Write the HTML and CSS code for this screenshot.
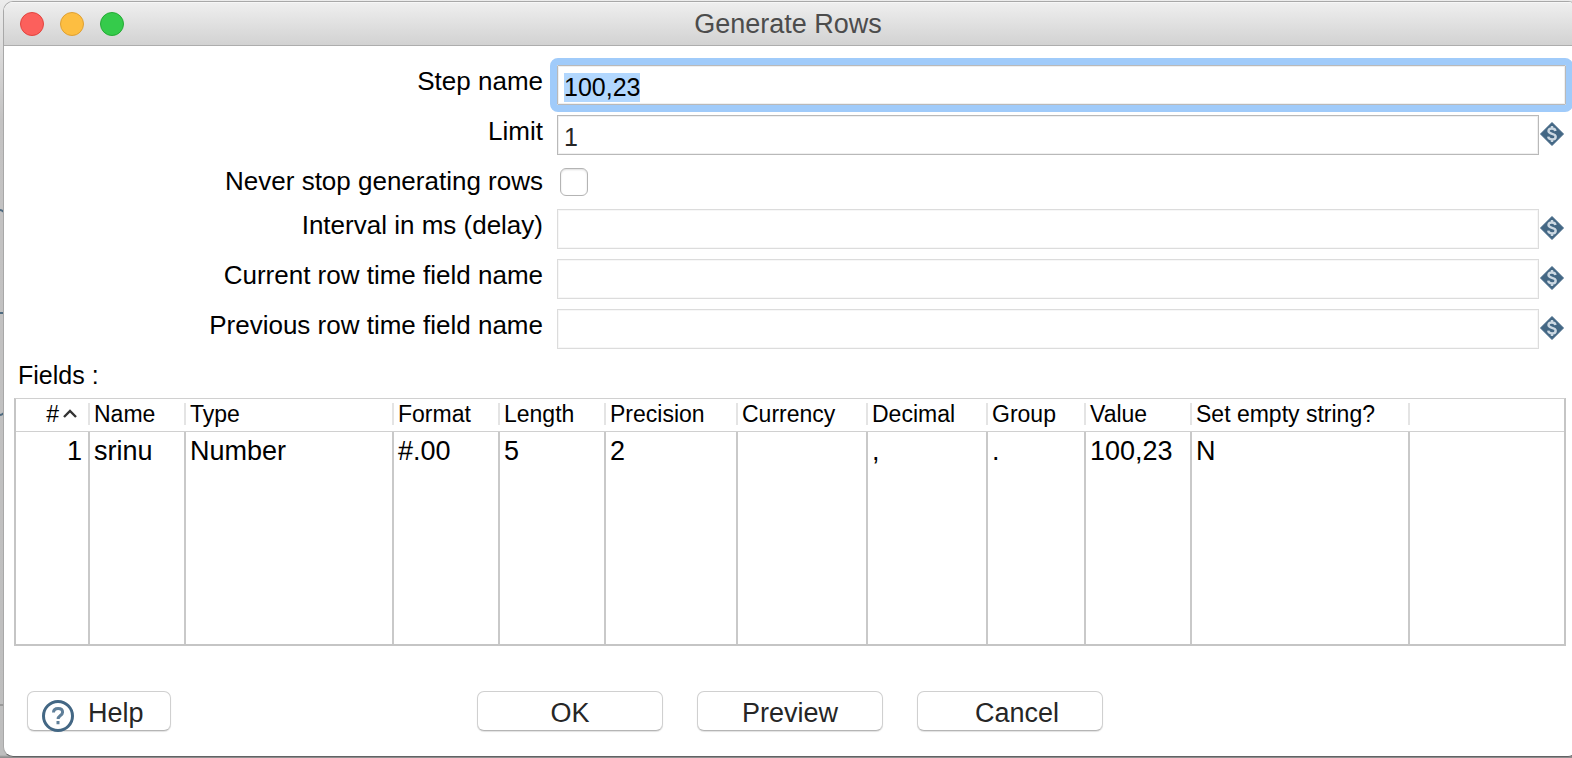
FILE: index.html
```html
<!DOCTYPE html>
<html lang="en">
<head>
<meta charset="utf-8">
<title>Generate Rows</title>
<link rel="stylesheet" href="styles.css">
</head>
<body>
<svg width="0" height="0" class="defs" aria-hidden="true">
  <symbol id="variable" viewBox="0 0 24 24">
    <path d="M12 0.500 23.500 12 12 23.500 0.500 12Z" fill="#436784" stroke="#436784" stroke-linejoin="round"/>
    <path d="M15.500 9C15.200 7.300 13.900 6.500 12 6.500C9.900 6.500 8.500 7.500 8.500 9.100C8.500 12.800 15.700 10.900 15.700 14.700C15.700 16.400 14.200 17.400 12 17.400C9.800 17.400 8.500 16.400 8.200 14.600M12 4V6.500M12 17.400V20" fill="none" stroke="#ccd8e2" stroke-width="2.400"/>
  </symbol>
</svg>
<svg class="canvas-lines" width="4" height="758" viewBox="0 0 4 758" aria-hidden="true">
  <path d="M0 210q2 0 4 2M0 313h4M0 415q2 0 4-2" fill="none" stroke="#4f6b80" stroke-width="2"/>
  <path d="M0 705h4" stroke="#999" stroke-width="2"/>
</svg>
<main class="window">
  <header class="titlebar">
    <div class="lights">
      <button class="light close" type="button" aria-label="Close"></button>
      <button class="light minimize" type="button" aria-label="Minimize"></button>
      <button class="light zoom" type="button" aria-label="Zoom"></button>
    </div>
    <h1>Generate Rows</h1>
  </header>
  <form class="content">
    <div class="settings">
      <label for="step">Step name</label>
      <input class="box focused" id="step" type="text" value="100,23">
      <label for="limit">Limit</label>
      <div class="field"><input class="box" id="limit" type="text" value="1"><svg class="var"><use href="#variable"/></svg></div>
      <label for="never">Never stop generating rows</label>
      <div class="check-cell"><input class="check" id="never" type="checkbox"></div>
      <label for="interval">Interval in ms (delay)</label>
      <div class="field"><input class="box" id="interval" type="text" disabled><svg class="var"><use href="#variable"/></svg></div>
      <label for="current">Current row time field name</label>
      <div class="field"><input class="box" id="current" type="text" disabled><svg class="var"><use href="#variable"/></svg></div>
      <label for="previous">Previous row time field name</label>
      <div class="field"><input class="box" id="previous" type="text" disabled><svg class="var"><use href="#variable"/></svg></div>
    </div>
    <h2 id="fields-title">Fields :</h2>
    <div class="table-area">
      <table aria-labelledby="fields-title">
        <colgroup>
          <col class="w-num"><col class="w-name"><col class="w-type"><col class="w-std"><col class="w-std"><col class="w-prec"><col class="w-curr"><col class="w-dec"><col class="w-group"><col class="w-std"><col class="w-set"><col>
        </colgroup>
        <thead>
          <tr>
            <th class="num"><span>#<svg width="14" height="9" viewBox="0 0 14 9"><path d="M1 8 7 2l6 6" fill="none" stroke="#333" stroke-width="2.400"/></svg></span></th>
            <th><span>Name</span></th><th><span>Type</span></th><th><span>Format</span></th><th><span>Length</span></th><th><span>Precision</span></th><th><span>Currency</span></th><th><span>Decimal</span></th><th><span>Group</span></th><th><span>Value</span></th><th><span>Set empty string?</span></th><th></th>
          </tr>
        </thead>
        <tbody>
          <tr>
            <td class="num">1</td><td>srinu</td><td>Number</td><td>#.00</td><td>5</td><td>2</td><td></td><td>,</td><td>.</td><td>100,23</td><td>N</td><td></td>
          </tr>
        </tbody>
      </table>
    </div>
    <footer class="actions">
      <button class="btn help" type="button"><svg width="32" height="32" viewBox="0 0 32 32"><circle cx="16" cy="16" r="14.500" fill="#fff" stroke="#436784" stroke-width="3"/><path d="M11.500 12.500c0-2.800 2-4 4.600-4 2.700 0 4.500 1.400 4.500 3.700 0 3.300-4.500 3.300-4.500 6.800M16 21v3.200" fill="none" stroke="#5f7f99" stroke-width="3"/></svg>Help</button>
      <div class="main-actions">
        <button class="btn" type="button">OK</button>
        <button class="btn" type="button">Preview</button>
        <button class="btn cancel" type="button">Cancel</button>
      </div>
    </footer>
  </form>
</main>
<script src="script.js"></script>
</body>
</html>
```
FILE: styles.css
```css
* { box-sizing: border-box; }

body {
  margin: 0;
  padding: 1px 0 1px 3px;
  min-height: 100vh;
  display: flex;
  background: linear-gradient(#ececec, #c4c3c3 120px, #bebebe calc(100% - 3px), #8e8e8e calc(100% - 1px));
  color: #000;
  font-family: "Liberation Sans", Arial, sans-serif;
  font-size: 26px;
  overflow: hidden;
}

.defs { position: absolute; }
.canvas-lines { position: absolute; left: 0; top: 0; }

/* The window's right edge runs slightly past the viewport. */
.window {
  position: relative;
  flex: 1;
  display: flex;
  flex-direction: column;
  margin-right: -6px;
  background: #fff;
  border: 1px solid #a8a8a8;
  border-bottom-color: #626264;
  border-radius: 10px;
  overflow: hidden;
}

.titlebar {
  display: grid;
  grid-template-columns: 1fr auto 1fr;
  align-items: center;
  height: 44px;
  padding: 1px 21px 0 16px;
  background: linear-gradient(#efefef, #d2d2d2);
  border-bottom: 1px solid #adadad;
  box-shadow: inset 0 1px #f7f7f7;
}

h1 {
  margin: 0;
  font-size: 27px;
  font-weight: 400;
  line-height: 32px;
  color: #4c4c4c;
}

.lights { display: flex; gap: 16px; }
.light { width: 24px; height: 24px; padding: 0; border: 1px solid; border-radius: 50%; }
.close { background: #fc605c; border-color: #e2443f; }
.minimize { background: #fdbe41; border-color: #dfa033; }
.zoom { background: #35cb4b; border-color: #25ab35; }

.content {
  flex: 1;
  display: flex;
  flex-direction: column;
  padding: 19px 11px 25px 10px;
}

.settings {
  display: grid;
  grid-template-columns: 529px 1fr;
  gap: 10px 14px;
}

.settings label {
  height: 34px;
  line-height: 32px;
  text-align: right;
  white-space: nowrap;
}

.field { display: flex; align-items: center; gap: 1px; padding-right: 2px; }
.var { flex: none; width: 24px; height: 24px; margin-bottom: 2px; }

.box {
  flex: 1;
  width: 100%;
  min-width: 0;
  height: 40px;
  padding: 4px 6px 0;
  border: 1px solid #b9b9b9;
  border-radius: 0;
  background: #fff;
  box-shadow: inset 0 0 0 1px #f0f0f0;
  color: #262626;
  font: 25px/32px "Liberation Sans", Arial, sans-serif;
  outline: 0;
}
.box:disabled { border-color: #dcdcdc; box-shadow: inset 0 0 0 1px #f7f7f7; }
.focused {
  color: #000;
  outline: 7px solid #a0cbfa;
  border-radius: 1px;
}
.box::selection { background: #b2d7fe; color: #000; }

.check-cell { display: flex; align-items: center; padding-left: 3px; }
.check {
  appearance: none;
  width: 28px;
  height: 28px;
  margin: 0;
  border: 1px solid #b4b4b4;
  border-radius: 6px;
  background: #fff;
  box-shadow: inset 0 1px 2px #ddd;
}

h2 {
  margin: 10px 0 6px 4px;
  font-size: 25px;
  font-weight: 400;
  line-height: 33px;
}

.table-area {
  flex: 1;
  display: flex;
  border: 2px solid #c5c5c5;
  border-top: 1px solid #d0d0d0;
}

table {
  width: 100%;
  border-collapse: separate;
  border-spacing: 0;
  table-layout: fixed;
}
.w-num { width: 74px; }
.w-name { width: 96px; }
.w-type { width: 208px; }
.w-std { width: 106px; }
.w-prec { width: 132px; }
.w-curr { width: 130px; }
.w-dec { width: 120px; }
.w-group { width: 98px; }
.w-set { width: 218px; }

th, td {
  padding: 0 0 0 4px;
  text-align: left;
  font-weight: 400;
  white-space: nowrap;
}
th {
  height: 33px;
  padding: 0 0 2px;
  border-bottom: 1px solid #d0d0d0;
  font-size: 23px;
}
th span {
  display: block;
  padding-left: 4px;
  border-right: 2px solid #e4e4e4;
  line-height: 22px;
}
td {
  padding-top: 2px;
  border-right: 2px solid #c9c9c9;
  font-size: 27px;
  line-height: 34px;
  vertical-align: top;
}
td:last-child { border-right: 0; }
th.num, td.num { text-align: right; }
th.num span { padding-right: 11px; }
th.num svg { margin: 0 0 4px 4px; }
td.num { padding-right: 6px; }

.actions {
  display: grid;
  grid-template-columns: 1fr auto 1fr;
  align-items: center;
  margin-top: 45px;
  padding: 0 13px;
}
.main-actions { display: flex; gap: 34px; }

.btn {
  width: 186px;
  height: 40px;
  padding: 3px 0 0;
  border: 1px solid #d0d0d0;
  border-bottom-color: #b5b5b5;
  border-radius: 7px;
  background: #fff;
  box-shadow: 0 1px 1px #e2e2e2;
  color: #262626;
  font: 27px/32px "Liberation Sans", Arial, sans-serif;
}
.cancel { padding-left: 14px; }
.help {
  display: flex;
  align-items: center;
  gap: 14px;
  width: 144px;
  padding-left: 14px;
}
.help svg { flex: none; margin-top: 6px; }
```
FILE: script.js
```js
const step = document.getElementById('step');
step.focus();
step.select();
```
